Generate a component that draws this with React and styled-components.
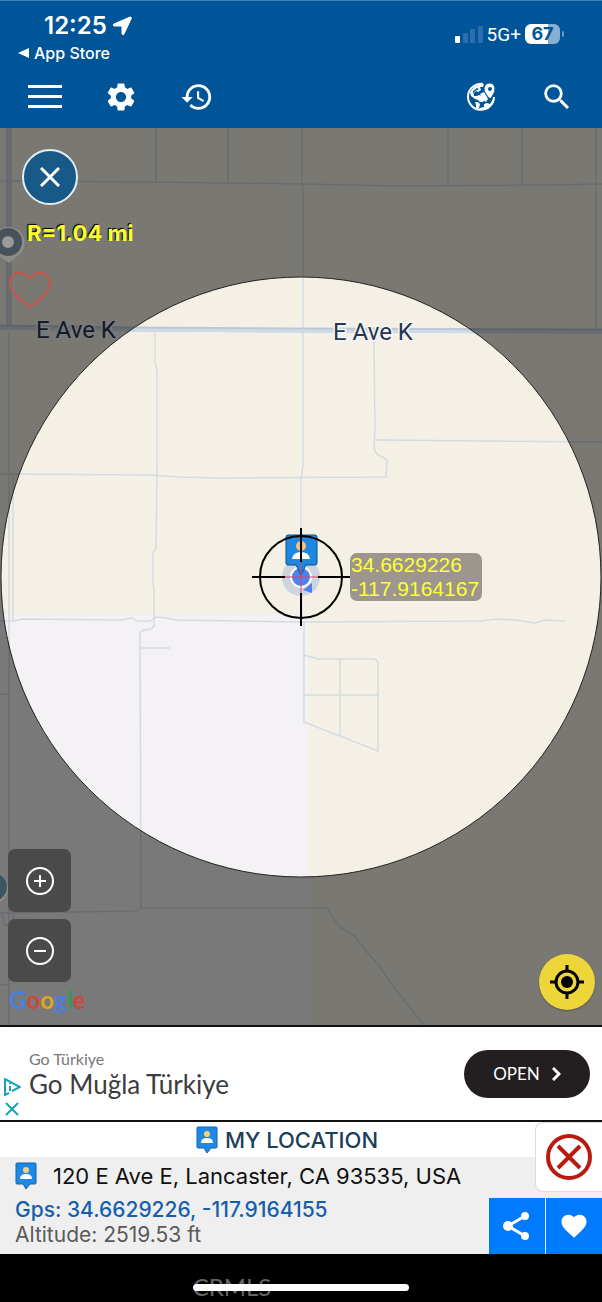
import React, { useState } from 'react';
import styled, { createGlobalStyle } from 'styled-components';
import { MdSettings, MdHistory, MdSearch, MdFavorite } from 'react-icons/md';

const GlobalStyle = createGlobalStyle`
    * {
        box-sizing: border-box;
    }
    body {
        margin: 0;
        background: #000;
        font-family: Inter, "Liberation Sans", sans-serif;
    }
    h1, h2, p {
        margin: 0;
        font-weight: 400;
    }
    button {
        padding: 0;
        border: none;
        background: none;
        font-family: inherit;
        cursor: pointer;
    }
    svg {
        display: block;
    }
`;

const roads = [
    'M0 181 L150 182 L304 184 L400 186 L540 185 L602 184',
    'M156 128 V182',
    'M228 128 V183',
    'M302 128 V184 L303 190 V465 L301 480 V535 L302 620',
    'M448 128 V186',
    'M522 128 V185',
    'M596 128 V328',
    'M9 331 V1025',
    'M13 475 V620',
    'M155 333 V362 L157 370 V470 L156 548 L153 553 V583 L154 590 V626 L151 629 L143 630 L140 633 L141 908 L138 911 L0 913',
    'M140 648 H170',
    'M0 474 L150 475 L180 477 L220 478 L386 477 L387 462 Q387 458 380 456 Q374 453 374 446 L375 430 L374 340',
    'M374 440 L602 442',
    'M0 621 L14 621 L22 619 L122 620 L131 618 L138 621 L150 621 L156 617 L166 618 L176 620 L300 622 L480 621 L497 619 L515 620 L535 623 L545 620 L565 621',
    'M304 622 V722 L378 751 V664 Q378 659 372 659 H318 L304 655',
    'M304 695 H378',
    'M340 659 V736',
    'M141 908 H327 L334 919 L341 928 L355 936 L365 950 L378 964 L392 985 L408 1005 L424 1025',
    'M0 694 H8',
    'M0 985 H10',
    'M2 914 L4 924 L10 927 L14 914',
];

function MenuIcon() {
    return (
        <svg width="34" height="26" viewBox="0 0 34 26" fill="#fff">
            <rect y="1" width="34" height="3" />
            <rect y="11" width="34" height="3" />
            <rect y="21" width="34" height="3" />
        </svg>
    );
}

function GlobePinIcon() {
    return (
        <svg width="30" height="30" viewBox="0 0 30 30">
            <path d="M17 2 A13 13 0 1 0 28 15" fill="none" stroke="#fff" strokeWidth="2" />
            <path d="M4 10 L8 5 L13 2 L18 2 L17 5 L14 5 L15 8 L12 10 L10 9 L8 11 L8 14 L11 14 L13 13 L16 14 L19 17 L17 20 L14 20 L12 18 L9 17 L5 14 Z" fill="#fff" />
            <path d="M7 9 L11 6 L13 7 L11 8 L9 9 L7 12 Z" fill="#005498" />
            <path d="M9 20 L12 20 L14 22 L13 26 L10 26 L10 23 Z" fill="#fff" />
            <path d="M14 12 L18 10 L20 13 L22 17 L20 20 L17 18 Z" fill="#fff" />
            <path d="M28 15 A13 13 0 0 1 15 28 L12 28 L14 26 L18 25 L18 22 L21 21 L24 22 L27 17 Z" fill="#fff" />
            <path d="M24 1 C20 1 18 4 18 7 C18 10 21 14 24 17 C27 14 29 10 29 7 C29 4 27 1 24 1 Z" fill="#fff" stroke="#005498" strokeWidth="1" />
            <circle cx="24" cy="7" r="2" fill="#005498" />
        </svg>
    );
}

function PersonPin() {
    return (
        <svg width="22" height="28" viewBox="0 0 22 28">
            <path d="M2 1 H20 Q21 1 21 2 V21 Q21 22 20 22 H15 L11 27 L8 22 H2 Q1 22 1 21 V2 Q1 1 2 1 Z" fill="#1e88e5" stroke="#1565ad" />
            <circle cx="11" cy="8" r="3" fill="#ffcc80" />
            <path d="M5 17 Q5 12 11 12 Q17 12 17 17 Z" fill="#fff" />
        </svg>
    );
}

function MapCanvas() {
    return (
        <Canvas viewBox="0 128 602 897" preserveAspectRatio="xMidYMid slice" aria-hidden="true">
            <rect y="128" width="602" height="897" fill="#f4f0e5" />
            <rect y="615" width="309" height="410" fill="#f4f2f4" />
            <g fill="none" stroke="#d3dbe2" strokeWidth="1.5">
                {roads.map((d) => <path key={d} d={d} />)}
            </g>
            <path d="M9 128 V327" stroke="#c6cdd6" strokeWidth="5" />
            <path d="M9 128 V327" stroke="#d3dae4" strokeWidth="2" />
            <path d="M0 327 L130 329 L290 330 L602 331" fill="none" stroke="#bdc8d6" strokeWidth="5" />
            <path d="M0 328 L130 330 L290 331 L602 332" fill="none" stroke="#cfdae7" strokeWidth="3" />
            <RoadName x="36" y="338">E Ave K</RoadName>
            <RoadName x="333" y="340">E Ave K</RoadName>

            <path fillRule="evenodd" fill="rgba(0, 0, 0, 0.5)" d="M0 128 H602 V1025 H0 Z M1 577 a300 300 0 1 0 600 0 a300 300 0 1 0 -600 0 Z" />
            <circle cx="301" cy="577" r="300" fill="none" stroke="#222" />

            <path d="M9 263 L-3 254 A16 16 0 1 1 20 254 Z" fill="#8e8c8a" />
            <circle cx="8" cy="242" r="14" fill="#48525a" />
            <circle cx="8" cy="242" r="6" fill="#9a9a9a" />
            <circle cx="-8" cy="888" r="16" fill="#918f8f" />
            <circle cx="-7" cy="887" r="14" fill="#3b5661" />

            <circle cx="301" cy="577" r="19" fill="#cdd3df" />
            <circle cx="301" cy="577" r="10" fill="#4a83ee" stroke="#fff" strokeWidth="2" />
            <path d="M303 590 L312 583 V593 Z" fill="#4a83ee" />
            <path d="M288 535 H315 Q317 535 317 537 V563 Q317 565 315 565 H306 L301 575 L296 565 H288 Q286 565 286 563 V537 Q286 535 288 535 Z" fill="#1e88e0" stroke="#0d4f8c" />
            <circle cx="301" cy="546" r="5" fill="#f4bf7c" />
            <path d="M292 559 Q293 552 301 552 Q309 552 310 559 Z" fill="#fff" />
            <circle cx="301" cy="577" r="41" fill="none" stroke="#000" strokeWidth="2" />
            <path d="M301 528 V562 M301 593 V626 M252 577 H285 M318 577 H351" stroke="#000" strokeWidth="2" />
            <path d="M301 562 V593 M285 577 H318" stroke="#d8456a" strokeWidth="1" />
        </Canvas>
    );
}

function App() {
    const [adOpen, setAdOpen] = useState(true);
    const [liked, setLiked] = useState(false);

    return (
        <Page>
            <GlobalStyle />
            <Header>
                <StatusBar>
                    <div>
                        <Clock>
                            12:25
                            <svg width="20" height="20" viewBox="0 0 20 20">
                                <path d="M18 1 Q20 1 19 3 L12 18 Q11 20 10 18 V11 Q10 10 9 10 H2 Q0 9 2 8 Z" fill="#fff" stroke="#fff" strokeLinejoin="round" />
                            </svg>
                        </Clock>
                        <BackLink href="#app-store">
                            <svg width="11" height="10" viewBox="0 0 11 10"><path d="M0 5 L11 0 V10 Z" fill="#fff" /></svg>
                            App Store
                        </BackLink>
                    </div>
                    <Signal>
                        <svg width="28" height="18" viewBox="0 0 28 18" fill="#2a6fab">
                            <rect x="0" y="11" width="5" height="7" rx="1" fill="#fff" />
                            <rect x="8" y="8" width="5" height="10" rx="1" />
                            <rect x="15" y="4" width="5" height="14" rx="1" />
                            <rect x="23" y="1" width="5" height="17" rx="1" />
                        </svg>
                        <Network>5G+</Network>
                        <Battery>67</Battery>
                    </Signal>
                </StatusBar>
                <Toolbar>
                    <ToolGroup>
                        <ToolButton aria-label="Menu"><MenuIcon /></ToolButton>
                        <ToolButton aria-label="Settings"><MdSettings size={34} /></ToolButton>
                        <ToolButton aria-label="History"><MdHistory size={34} /></ToolButton>
                    </ToolGroup>
                    <ToolGroup>
                        <ToolButton aria-label="World map"><GlobePinIcon /></ToolButton>
                        <ToolButton aria-label="Search"><MdSearch size={34} /></ToolButton>
                    </ToolGroup>
                </Toolbar>
            </Header>

            <MapArea>
                <MapCanvas />
                <Coordinates>34.6629226<br />-117.9164167</Coordinates>
                <MapControls>
                    <CloseRadius aria-label="Close radius">
                        <svg width="20" height="20" viewBox="0 0 20 20" stroke="#fff" strokeWidth="3">
                            <path d="M1 1 L19 19 M19 1 L1 19" />
                        </svg>
                    </CloseRadius>
                    <Radius>R=1.04 mi</Radius>
                    <HeartButton aria-label="Save place">
                        <svg width="44" height="38" viewBox="0 0 44 38" fill="none" stroke="#c9544c" strokeWidth="2">
                            <path d="M22 36 C13 29 2 22 2 12 C2 6 6 2 11 2 C16 2 19 5 22 7 C25 4 28 2 33 2 C38 2 42 6 42 12 C42 22 31 29 22 36 Z" />
                        </svg>
                    </HeartButton>
                    <ZoomGroup>
                        <ZoomButton aria-label="Zoom in">
                            <svg width="28" height="28" viewBox="0 0 28 28" fill="none" stroke="#fff" strokeWidth="2">
                                <circle cx="14" cy="14" r="13" />
                                <path d="M8 14 H20 M14 8 V20" />
                            </svg>
                        </ZoomButton>
                        <ZoomButton aria-label="Zoom out">
                            <svg width="28" height="28" viewBox="0 0 28 28" fill="none" stroke="#fff" strokeWidth="2">
                                <circle cx="14" cy="14" r="13" />
                                <path d="M8 14 H20" />
                            </svg>
                        </ZoomButton>
                    </ZoomGroup>
                    <Google>
                        <Letter $color="#4a7fe0">G</Letter>
                        <Letter $color="#d0453a">o</Letter>
                        <Letter $color="#dba91c">o</Letter>
                        <Letter $color="#4a7fe0">g</Letter>
                        <Letter $color="#3a9850">l</Letter>
                        <Letter $color="#d0453a">e</Letter>
                    </Google>
                </MapControls>
                <LocateButton aria-label="Find me">
                    <svg width="34" height="34" viewBox="0 0 34 34" fill="none" stroke="#000" strokeWidth="3">
                        <circle cx="17" cy="17" r="11" />
                        <circle cx="17" cy="17" r="6" fill="#000" stroke="none" />
                        <path d="M17 0 V6 M17 28 V34 M0 17 H6 M28 17 H34" />
                    </svg>
                </LocateButton>
            </MapArea>

            {adOpen && (
                <Ad>
                    <AdChoices>
                        <svg width="17" height="18" viewBox="0 0 17 18" fill="none" stroke="#16a5b8" strokeWidth="2">
                            <path d="M5 15 L1 17 V1 L16 9 L8 13" />
                            <path d="M6 8 V13 M6 5 V6" />
                        </svg>
                        <button aria-label="Close ad" onClick={() => setAdOpen(false)}>
                            <svg width="14" height="14" viewBox="0 0 14 14" stroke="#16a5b8" strokeWidth="2">
                                <path d="M1 1 L13 13 M13 1 L1 13" />
                            </svg>
                        </button>
                    </AdChoices>
                    <AdText>
                        <AdSmall>Go Türkiye</AdSmall>
                        <AdTitle>Go Muğla Türkiye</AdTitle>
                    </AdText>
                    <OpenButton>
                        OPEN
                        <svg width="9" height="14" viewBox="0 0 9 14" fill="none" stroke="#fff" strokeWidth="3">
                            <path d="M1 1 L7 7 L1 13" />
                        </svg>
                    </OpenButton>
                </Ad>
            )}

            <Place>
                <PlaceTitle><PersonPin />MY LOCATION</PlaceTitle>
                <PlaceBody>
                    <Address><PersonPin />120 E Ave E, Lancaster, CA 93535, USA</Address>
                    <Gps>Gps: 34.6629226, -117.9164155</Gps>
                    <Altitude>Altitude: 2519.53 ft</Altitude>
                </PlaceBody>
                <ClosePlace aria-label="Close location">
                    <svg width="48" height="48" viewBox="0 0 48 48" fill="none" stroke="#b81c10" strokeWidth="4">
                        <circle cx="24" cy="24" r="21" />
                        <path d="M13 13 L35 35 M35 13 L13 35" />
                    </svg>
                </ClosePlace>
                <Actions>
                    <ActionButton aria-label="Share">
                        <svg width="28" height="30" viewBox="0 0 28 30" fill="#fff">
                            <path d="M22 5 L5 15 L22 25" fill="none" stroke="#fff" strokeWidth="3" />
                            <circle cx="22" cy="5" r="4" />
                            <circle cx="5" cy="15" r="5" />
                            <circle cx="22" cy="25" r="4" />
                        </svg>
                    </ActionButton>
                    <ActionButton aria-label="Favorite" aria-pressed={liked} onClick={() => setLiked(!liked)}>
                        <MdFavorite size={30} />
                    </ActionButton>
                </Actions>
            </Place>

            <HomeBar>
                <Watermark>CRMLS</Watermark>
                <Indicator />
            </HomeBar>
        </Page>
    );
}

const Page = styled.div`
    display: flex;
    flex-direction: column;
    min-height: 100vh;
`;

const Header = styled.header`
    height: 128px;
    border-top: 1px solid #3b82bd;
    background: #005498;
    color: #fff;
`;

const StatusBar = styled.div`
    display: flex;
    justify-content: space-between;
    height: 68px;
    padding: 10px 42px 0 18px;
`;

const Clock = styled.p`
    display: flex;
    align-items: center;
    gap: 5px;
    padding-left: 26px;
    font-size: 24px;
    font-weight: 600;
    line-height: 30px;
`;

const BackLink = styled.a`
    display: flex;
    align-items: center;
    gap: 5px;
    color: #fff;
    font-size: 16px;
    font-weight: 500;
    line-height: 24px;
    text-decoration: none;
`;

const Signal = styled.div`
    display: flex;
    align-items: center;
    height: 30px;
    margin-top: 8px;
    gap: 4px;
`;

const Network = styled.span`
    font-family: Roboto, sans-serif;
    font-size: 19px;
`;

const Battery = styled.span`
    position: relative;
    width: 35px;
    height: 20px;
    border-radius: 6px;
    background: linear-gradient(to right, #fff 67%, #86afd2 67%);
    color: #005498;
    font-size: 18px;
    font-weight: 700;
    line-height: 20px;
    text-align: center;
    &::after {
        content: '';
        position: absolute;
        top: 7px;
        right: -4px;
        width: 2px;
        height: 6px;
        border-radius: 0 2px 2px 0;
        background: #6b9dc7;
    }
`;

const Toolbar = styled.nav`
    display: flex;
    justify-content: space-between;
    padding: 9px 26px 0 26px;
`;

const ToolGroup = styled.div`
    display: flex;
    gap: 38px;
`;

const ToolButton = styled.button`
    display: grid;
    place-items: center;
    width: 38px;
    height: 38px;
    color: #fff;
`;

const MapArea = styled.main`
    position: relative;
    display: flex;
    flex: 1;
    justify-content: space-between;
    align-items: flex-end;
    min-height: 600px;
    overflow: hidden;
`;

const Canvas = styled.svg`
    position: absolute;
    inset: 0;
    width: 100%;
    height: 100%;
`;

const RoadName = styled.text`
    fill: #28354d;
    stroke: #f4f6fa;
    stroke-width: 3px;
    paint-order: stroke;
    font-family: Roboto, sans-serif;
    font-size: 24px;
`;

const Coordinates = styled.p`
    position: absolute;
    top: 50%;
    left: 50%;
    margin: -24px 0 0 49px;
    padding: 0 3px 0 1px;
    border-radius: 7px;
    background: #9c968e;
    color: #ff3;
    font-family: "Liberation Sans", Arial, sans-serif;
    font-size: 21px;
    line-height: 24px;
`;

const MapControls = styled.div`
    position: relative;
    display: flex;
    flex-direction: column;
    align-items: flex-start;
    align-self: stretch;
    padding: 21px 0 9px 8px;
`;

const CloseRadius = styled.button`
    display: grid;
    place-items: center;
    width: 56px;
    height: 56px;
    margin-left: 14px;
    border: 2px solid #e4edf3;
    border-radius: 50%;
    background: #185a87;
`;

const Radius = styled.p`
    margin: 14px 0 24px 19px;
    color: #ff2;
    font-size: 22px;
    font-weight: 700;
    line-height: 28px;
    text-shadow: -1px -1px 1px #000;
`;

const HeartButton = styled.button`
    margin-bottom: auto;
`;

const ZoomGroup = styled.div`
    display: flex;
    flex-direction: column;
    gap: 7px;
`;

const ZoomButton = styled.button`
    display: grid;
    place-items: center;
    width: 63px;
    height: 63px;
    border-radius: 7px;
    background: #4a4a4a;
`;

const Google = styled.p`
    display: flex;
    padding: 2px 0 0 1px;
    font-family: Lato, sans-serif;
    font-size: 24px;
    font-weight: 700;
    line-height: 32px;
`;

const Letter = styled.span`
    color: ${(props) => props.$color};
`;

const LocateButton = styled.button`
    position: relative;
    display: grid;
    place-items: center;
    width: 56px;
    height: 56px;
    margin: 0 7px 15px 0;
    border-radius: 50%;
    background: #eed63a;
    box-shadow: 0 1px 2px rgba(0, 0, 0, 0.3);
`;

const Ad = styled.aside`
    display: flex;
    align-items: center;
    height: 97px;
    padding-right: 12px;
    border-top: 2px solid #111;
    border-bottom: 2px solid #111;
    background: #fff;
`;

const AdChoices = styled.div`
    display: flex;
    flex-direction: column;
    align-items: center;
    align-self: flex-end;
    gap: 6px;
    width: 24px;
    padding-bottom: 4px;
`;

const AdText = styled.div`
    flex: 1;
    padding-left: 5px;
    font-family: Lato, sans-serif;
`;

const AdSmall = styled.p`
    color: #777;
    font-size: 16px;
    line-height: 20px;
`;

const AdTitle = styled.h2`
    color: #3c3c3e;
    font-size: 26px;
    line-height: 30px;
`;

const OpenButton = styled.button`
    display: flex;
    align-items: center;
    justify-content: center;
    gap: 12px;
    width: 126px;
    height: 48px;
    border-radius: 24px;
    background: #231f20;
    color: #fff;
    && {
        font-family: Lato, sans-serif;
    }
    font-size: 17px;
`;

const Place = styled.section`
    position: relative;
    background: #efefef;
`;

const PlaceTitle = styled.h1`
    display: flex;
    align-items: center;
    justify-content: center;
    gap: 7px;
    height: 35px;
    padding-right: 28px;
    background: #fff;
    color: #1c3f59;
    font-size: 22px;
    font-weight: 500;
`;

const PlaceBody = styled.div`
    height: 97px;
    padding: 2px 15px 0;
    font-size: 21px;
    line-height: 25px;
`;

const Address = styled.p`
    display: flex;
    align-items: center;
    gap: 16px;
    height: 38px;
    padding-bottom: 4px;
    color: #111;
    font-size: 22px;
`;

const Gps = styled.p`
    color: #155fae;
    font-weight: 500;
`;

const Altitude = styled.p`
    color: #5a5a5a;
`;

const ClosePlace = styled.button`
    position: absolute;
    top: 0;
    right: 0;
    display: grid;
    place-items: center;
    width: 67px;
    height: 70px;
    border: 1px solid #ddd;
    border-right: none;
    border-radius: 8px 0 0 8px;
    background: #fff;
`;

const Actions = styled.div`
    position: absolute;
    right: 0;
    bottom: 0;
    display: flex;
    gap: 1px;
`;

const ActionButton = styled.button`
    display: grid;
    place-items: center;
    width: 56px;
    height: 56px;
    background: #007bff;
    color: #fff;
`;

const HomeBar = styled.footer`
    position: relative;
    height: 48px;
    background: #000;
`;

const Watermark = styled.p`
    padding: 18px 0 0 32%;
    color: #666;
    font-family: Lato, sans-serif;
    font-size: 24px;
    line-height: 30px;
`;

const Indicator = styled.div`
    position: absolute;
    bottom: 11px;
    left: 32%;
    width: 36%;
    height: 7px;
    border-radius: 4px;
    background: #fff;
`;

export default App;
